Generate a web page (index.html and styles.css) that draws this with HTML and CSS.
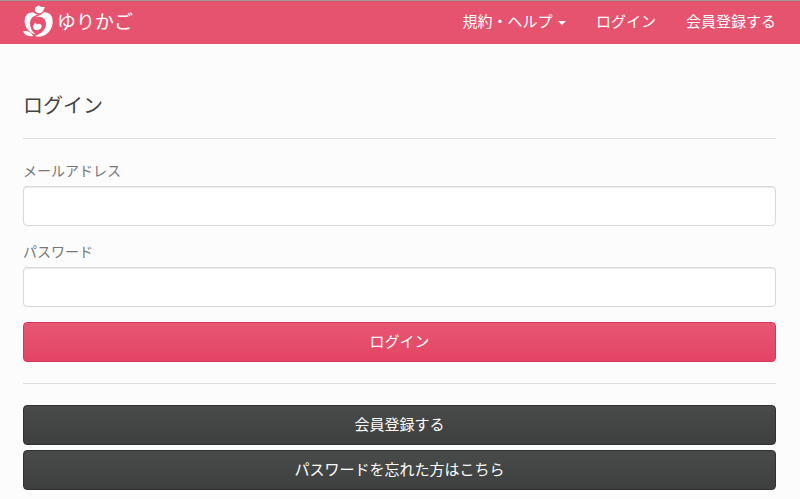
FILE: index.html
```
<!DOCTYPE html>
<html lang="ja">
<head>
    <meta charset="UTF-8">
    <meta name="viewport" content="width=device-width, initial-scale=1.0">
    <title>ログイン | ゆりかご</title>
    <link rel="stylesheet" href="styles.css">
</head>
<body>

<header class="navbar">
    <a class="brand" href="#">
        <svg class="logo" viewBox="0 0 90 96" aria-hidden="true">
            <path d="M46 0C50 5 57 7 66 6C62 11 62 24 49 25C36 25 32 12 39 6C43 3 46 3 46 0Z"/>
            <path d="M35 24C16 18 4 32 5 50C6 68 19 83 37 88C26 78 21 68 21 55C21 40 30 31 46 29C41 29 38 27 35 24Z"/>
            <path d="M62 22C57 29 48 32 37 37C57 31 69 41 69 56C69 72 57 86 36 92C42 96 52 96 60 93C79 86 89 69 89 49C89 31 78 20 62 22Z"/>
            <path d="M35 53C38 54 41 56 42 59C46 54 56 56 56 64C56 72 47 77 38 75C30 73 29 65 32 60C34 57 35 56 35 53Z"/>
            <path d="M0 79C13 76 25 82 31 93C18 96 5 91 0 79Z"/>
        </svg>
        <span>ゆりかご</span>
    </a>
    <nav class="nav">
        <a href="#">規約・ヘルプ <span class="caret"></span></a>
        <a href="#">ログイン</a>
        <a href="#">会員登録する</a>
    </nav>
</header>

<main class="container">
    <h1>ログイン</h1>
    <hr>
    <form class="login-form">
        <label for="email">メールアドレス</label>
        <input type="email" id="email">

        <label for="password">パスワード</label>
        <input type="password" id="password">

        <button type="submit" class="btn btn-primary">ログイン</button>
    </form>
    <hr>
    <div class="links">
        <button type="button" class="btn btn-dark">会員登録する</button>
        <button type="button" class="btn btn-dark">パスワードを忘れた方はこちら</button>
    </div>
</main>

</body>
</html>
```
FILE: styles.css
```
* {
    box-sizing: border-box;
}
body {
    margin: 0;
    background-color: #fcfcfc;
    color: #444;
    font-family: "Noto Sans CJK JP", sans-serif;
    font-size: 15px;
    line-height: 20px;
}
.navbar {
    display: flex;
    justify-content: space-between;
    align-items: center;
    height: 44px;
    padding: 0 24px 3px 23px;
    border-top: 1px solid #999;
    background-color: #e6536f;
}
.navbar a {
    color: #fff;
    text-decoration: none;
}
.brand {
    display: flex;
    align-items: center;
    gap: 4px;
    font-size: 19px;
}
.logo {
    width: 30px;
    height: 32px;
    fill: #fff;
}
.nav {
    display: flex;
    gap: 30px;
}
.caret {
    display: inline-block;
    margin-left: 2px;
    vertical-align: middle;
    border-top: 4px solid #fff;
    border-left: 4px solid transparent;
    border-right: 4px solid transparent;
}
.container {
    padding: 46px 24px 9px 23px;
}
h1 {
    margin: 0;
    font-size: 20px;
    font-weight: normal;
    line-height: 30px;
}
hr {
    height: 1px;
    margin: 18px 0 21px;
    border: 0;
    background-color: #ddd;
}
.login-form {
    display: flex;
    flex-direction: column;
}
label {
    margin-bottom: 6px;
    color: #777;
    font-size: 14px;
}
input {
    width: 100%;
    height: 40px;
    margin-bottom: 15px;
    padding: 8px 12px;
    border: 1px solid #d8d8d8;
    border-radius: 4px;
    background-color: #fff;
    box-shadow: inset 0 1px 1px rgba(0, 0, 0, 0.08);
    font: inherit;
}
.btn {
    width: 100%;
    height: 40px;
    padding: 0 12px 2px;
    border: 1px solid;
    border-radius: 4px;
    color: #fff;
    font: inherit;
    cursor: pointer;
}
.btn-primary {
    margin-bottom: 3px;
    border-color: #d93458;
    background-image: linear-gradient(#e75672, #e44465);
}
.btn-dark {
    border-color: #303131;
    background-image: linear-gradient(#494b4a, #3e403f);
}
.links {
    display: flex;
    flex-direction: column;
    gap: 5px;
}
```
